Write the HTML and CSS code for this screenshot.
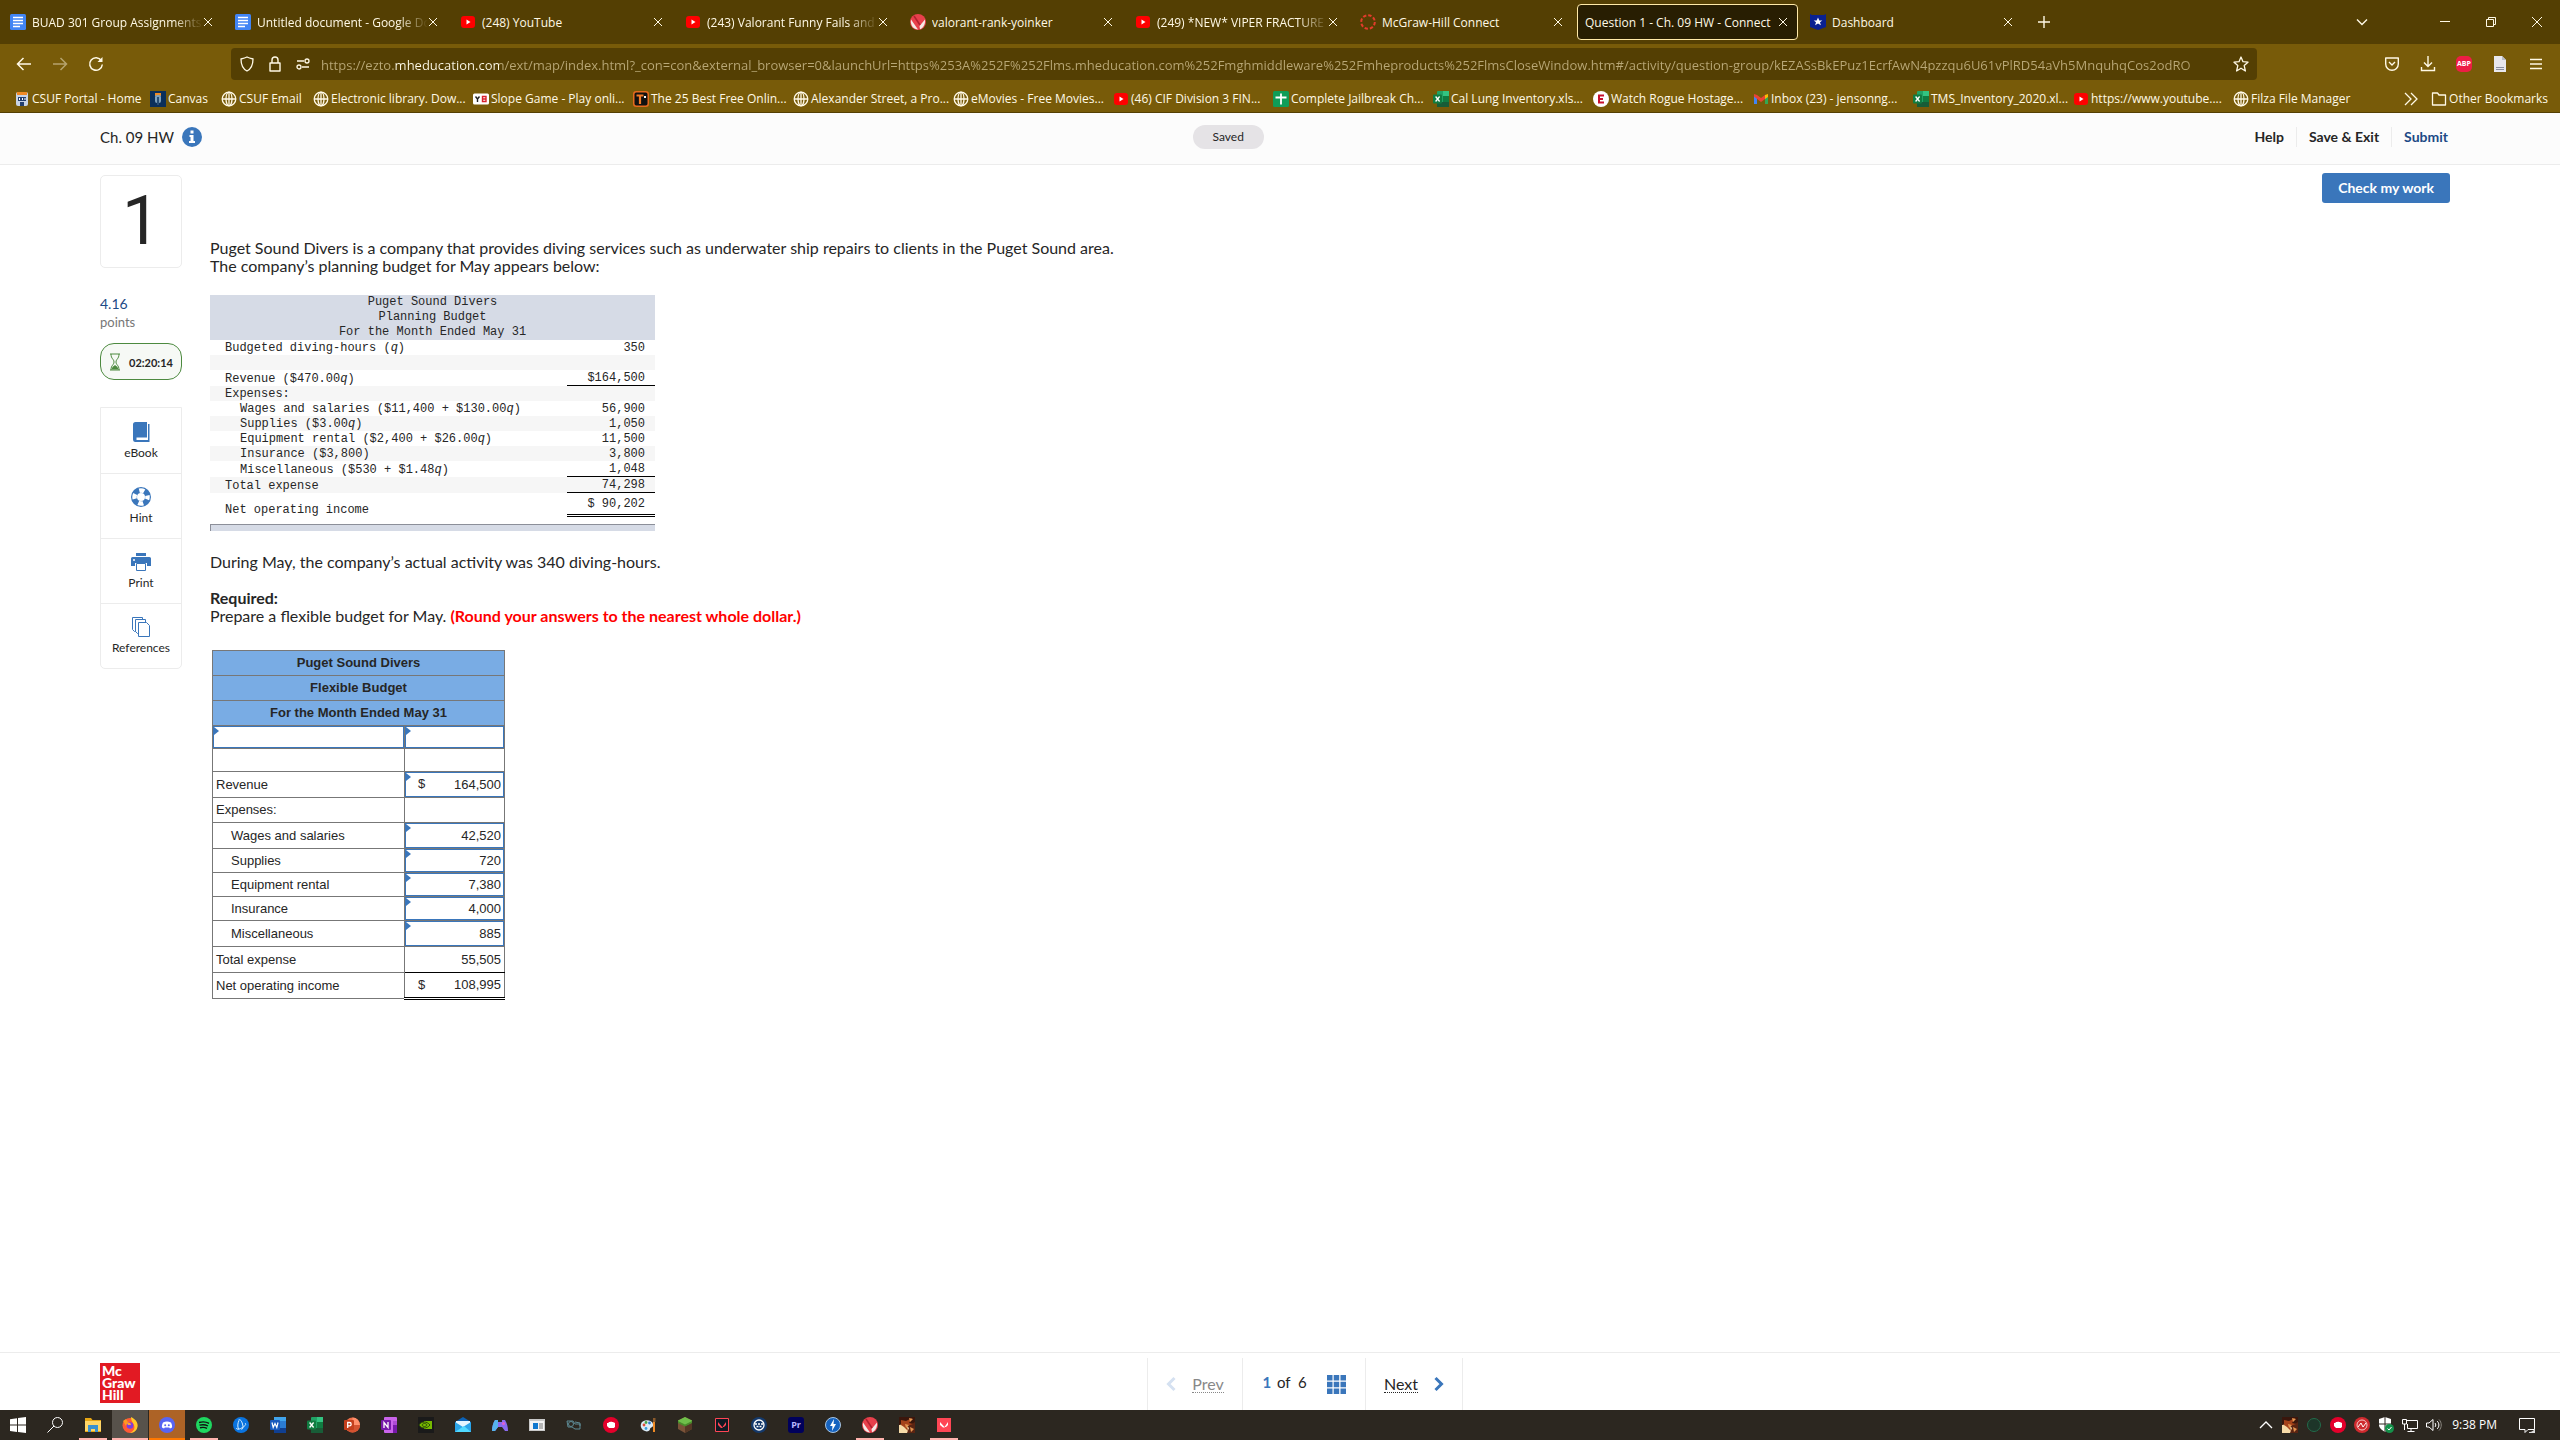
FILE: index.html
```
<!DOCTYPE html>
<html lang="en">
<head>
  <meta charset="UTF-8" />
  <title>Question 1 - Ch. 09 HW - Connect</title>
  <meta name="viewport" content="width=device-width, initial-scale=1" />
  <link rel="stylesheet" href="styles.css">
</head>
<body>

  <!-- shared icons -->
  <svg width="0" height="0" class="sprite" aria-hidden="true">
    <symbol id="i-close" viewBox="0 0 10 10"><path d="M1 1l8 8M9 1l-8 8" stroke="currentColor" fill="none"/></symbol>
    <symbol id="i-doc" viewBox="0 0 16 16"><rect width="16" height="16" rx="1.5" fill="#4285f4"/><path d="M3 3.5h10M3 6.5h10M3 9.5h10M3 12.500h7" stroke="#fff" stroke-width="1.5"/></symbol>
    <symbol id="i-yt" viewBox="0 0 16 16"><rect x="1" y="2" width="14" height="12" rx="3" fill="#f00"/><path d="M6.500 5.500v5l4-2.500z" fill="#fff"/></symbol>
    <symbol id="i-val" viewBox="0 0 16 16"><circle cx="8" cy="8" r="8" fill="#e8404c"/><path d="M1 5.500L8 15.500C4 15.500 0 12 1 5.500z" fill="#f5e9e6"/><path d="M15 5.500L9.500 12l.5 3.300c3-1 5.500-5 5-9.800z" fill="#f5e9e6"/><path d="M4 2l6 9" stroke="#b3202f" stroke-width="1.500"/></symbol>
    <symbol id="i-ring" viewBox="0 0 16 16"><circle cx="8" cy="8" r="6.800" fill="none" stroke="#e23c2c" stroke-width="2" stroke-dasharray="3.400 1.940"/></symbol>
    <symbol id="i-dash" viewBox="0 0 16 16"><path d="M0 0l2 1h12l2-1v13l-8 3-8-3z" fill="#0a2191"/><path d="M8 3.500l1.300 3h3L10 8.300l.9 3L8 9.600l-2.900 1.700.9-3-2.300-1.800h3z" fill="#fff"/></symbol>
    <symbol id="i-globe" viewBox="0 0 16 16"><g fill="none" stroke="currentColor" stroke-width="1.300"><circle cx="8" cy="8" r="6.800"/><ellipse cx="8" cy="8" rx="3" ry="6.800"/><path d="M1.200 8h13.600M8 1v14"/></g></symbol>
    <symbol id="i-csuf" viewBox="0 0 16 16"><rect x="2" y="1" width="12" height="14" rx="2" fill="#c8d3e6"/><path d="M3 1h10v3H3z" fill="#f08a24"/><path d="M4 6h8v4H4zM6 11h4v4H6z" fill="#23406f"/><path d="M5 7h1v2H5zM8 7h1v2H8zM10.500 7h1v2h-1z" fill="#fff"/></symbol>
    <symbol id="i-canvas" viewBox="0 0 16 16"><rect width="16" height="16" fill="#0b2f5b"/><path d="M5 2h6v3H5z" fill="#f08a24"/><rect x="5" y="4" width="6" height="8" rx="2" fill="#7da0bd"/><path d="M7 6h2v8H7z" fill="#274c74"/></symbol>
    <symbol id="i-y8" viewBox="0 0 16 16"><rect y="2.500" width="16" height="11" rx="1.500" fill="#fff"/><path d="M2.500 5.500L4.500 8v3M6.500 5.500L4.500 8" stroke="#222" stroke-width="1.400" fill="none"/><path d="M9.500 5.500h3.500v5H9.500zM9.500 8H13" stroke="#d8202b" stroke-width="1.400" fill="none"/></symbol>
    <symbol id="i-t" viewBox="0 0 16 16"><rect x=".75" y=".75" width="14.500" height="14.500" rx="2.500" fill="#111" stroke="#e56a1e" stroke-width="1.500"/><path d="M3.500 4.500h7M7 4.500V13" stroke="#f47a26" stroke-width="2.200"/><path d="M11 5h2v2h-2z" fill="#fff"/></symbol>
    <symbol id="i-sheet" viewBox="0 0 16 16"><rect width="16" height="16" rx="1.500" fill="#0f9d58"/><path d="M2.500 6.500h11M8 2.500v11" stroke="#fff" stroke-width="1.800"/></symbol>
    <symbol id="i-xl" viewBox="0 0 16 16"><rect x="4" width="12" height="16" rx="1" fill="#21a366"/><path d="M10 0h6v5h-6z" fill="#33c481"/><path d="M4 11h12v5H4z" fill="#185c37"/><path d="M10 5h6v6h-6z" fill="#107c41"/><rect y="3.500" width="9" height="9" rx="1" fill="#107c41"/><path d="M2.600 5.500l4 5M6.600 5.500l-4 5" stroke="#fff" stroke-width="1.300"/></symbol>
    <symbol id="i-e" viewBox="0 0 16 16"><circle cx="8" cy="8" r="8" fill="#fff"/><path d="M11 4.500H6v7h5M6 8h4" stroke="#c8102e" stroke-width="2" fill="none"/></symbol>
    <symbol id="i-gmail" viewBox="0 0 16 16"><path d="M1 4v9h3V7z" fill="#4285f4"/><path d="M12 7v6h3V4z" fill="#34a853"/><path d="M1 3l3 1 4 3 4-3v4L8 11 1 5.500z" fill="#ea4335"/><path d="M12 4l3-1v3l-3 2z" fill="#fbbc04"/></symbol>
    <symbol id="i-fist" viewBox="0 0 16 16"><circle cx="8" cy="8" r="8" fill="#e4002b"/><path d="M4 6h1.600V5h1.700V4.700H9V5h1.600v.7H12V10l-1.200 1H6L4 9z" fill="#fff"/></symbol>
    <symbol id="i-lol" viewBox="0 0 16 16"><rect width="16" height="16" fill="#5a2412"/><path d="M0 8l5-2 5 5-2 5H0z" fill="#f6dba8"/><path d="M0 0h16v5l-5 3-4-2-7 2z" fill="#3a160c"/><path d="M2 3l5 1 6-3-3 5 4 1-6 2 1 5-4-4-3-2z" fill="#a5421a"/><path d="M10 1l4 1-3 3zM6 7l4 1-3 3zM11 10l4 2-3 3z" fill="#e59550"/></symbol>
  </svg>

  <header class="browser">
    <div class="tab-strip">
      <div class="tab"><svg class="ico"><use href="#i-doc"/></svg><a href="#" class="cut">BUAD 301 Group Assignments -</a><button aria-label="Close tab"><svg><use href="#i-close"/></svg></button></div>
      <div class="tab"><svg class="ico"><use href="#i-doc"/></svg><a href="#" class="cut">Untitled document - Google Do</a><button aria-label="Close tab"><svg><use href="#i-close"/></svg></button></div>
      <div class="tab"><svg class="ico"><use href="#i-yt"/></svg><a href="#">(248) YouTube</a><button aria-label="Close tab"><svg><use href="#i-close"/></svg></button></div>
      <div class="tab"><svg class="ico"><use href="#i-yt"/></svg><a href="#" class="cut">(243) Valorant Funny Fails and W</a><button aria-label="Close tab"><svg><use href="#i-close"/></svg></button></div>
      <div class="tab"><svg class="ico"><use href="#i-val"/></svg><a href="#">valorant-rank-yoinker</a><button aria-label="Close tab"><svg><use href="#i-close"/></svg></button></div>
      <div class="tab"><svg class="ico"><use href="#i-yt"/></svg><a href="#" class="cut">(249) *NEW* VIPER FRACTURE M</a><button aria-label="Close tab"><svg><use href="#i-close"/></svg></button></div>
      <div class="tab"><svg class="ico"><use href="#i-ring"/></svg><a href="#">McGraw-Hill Connect</a><button aria-label="Close tab"><svg><use href="#i-close"/></svg></button></div>
      <div class="tab active"><a href="#">Question 1 - Ch. 09 HW - Connect</a><button aria-label="Close tab"><svg><use href="#i-close"/></svg></button></div>
      <div class="tab"><svg class="ico"><use href="#i-dash"/></svg><a href="#">Dashboard</a><button aria-label="Close tab"><svg><use href="#i-close"/></svg></button></div>
      <button class="new-tab" aria-label="New tab"><svg viewBox="0 0 12 12"><path d="M6 0v12M0 6h12" stroke="currentColor" stroke-width="1.400"/></svg></button>
      <div class="window-buttons">
        <button class="list-tabs" aria-label="List all tabs"><svg viewBox="0 0 12 12"><path d="M1 3.500l5 5 5-5" stroke="currentColor" stroke-width="1.400" fill="none"/></svg></button>
        <button aria-label="Minimize"><svg viewBox="0 0 12 12"><path d="M1 5.500h10" stroke="currentColor"/></svg></button>
        <button aria-label="Restore"><svg viewBox="0 0 12 12"><path d="M1.500 3.500h7v7h-7zM3.500 3.500v-2h7v7h-2" stroke="currentColor" fill="none"/></svg></button>
        <button aria-label="Close"><svg viewBox="0 0 12 12"><path d="M1 1l10 10M11 1L1 11" stroke="currentColor"/></svg></button>
      </div>
    </div>

    <div class="nav-bar">
      <div class="nav-buttons">
        <button aria-label="Back"><svg viewBox="0 0 16 16"><path d="M15 8H1.500M7.500 2L1.500 8l6 6" stroke="currentColor" stroke-width="1.500" fill="none"/></svg></button>
        <button aria-label="Forward" disabled><svg viewBox="0 0 16 16"><path d="M1 8h13.500M8.500 2l6 6-6 6" stroke="currentColor" stroke-width="1.500" fill="none"/></svg></button>
        <button aria-label="Reload"><svg viewBox="0 0 16 16"><path d="M13.300 4.500A6.300 6.300 0 1 0 14.300 8.500" stroke="currentColor" stroke-width="1.500" fill="none"/><path d="M14.500 1v5h-5z" fill="currentColor"/></svg></button>
      </div>
      <div class="url-bar">
        <svg viewBox="0 0 16 16"><path d="M8 1c2 1 4 1.500 6 2 0 6-2 10-6 12C4 13 2 9 2 3c2-.5 4-1 6-2z" stroke="currentColor" stroke-width="1.300" fill="none"/></svg>
        <svg viewBox="0 0 16 16"><path d="M3 7h10v8H3zM5 7V4a3 3 0 0 1 6 0v3" stroke="currentColor" stroke-width="1.400" fill="none" stroke-linejoin="round"/></svg>
        <svg viewBox="0 0 16 16"><path d="M2 5h7M7 11h7" stroke="currentColor" stroke-width="1.500"/><circle cx="12" cy="5" r="2" fill="none" stroke="currentColor" stroke-width="1.300"/><circle cx="4" cy="11" r="2" fill="none" stroke="currentColor" stroke-width="1.300"/></svg>
        <input type="text" aria-label="Address" value="https://ezto.mheducation.com/ext/map/index.html?_con=con&amp;external_browser=0&amp;launchUrl=https%253A%252F%252Flms.mheducation.com%252Fmghmiddleware%252Fmheproducts%252FlmsCloseWindow.htm#/activity/question-group/kEZASsBkEPuz1EcrfAwN4pzzqu6U61vPlRD54aVh5MnquhqCos2odRO">
        <button aria-label="Bookmark this page"><svg viewBox="0 0 16 16"><path d="M8 1l2 4.700 5 .5-3.800 3.400L12.400 15 8 12.200 3.600 15l1.200-5.400L1 6.200l5-.5z" stroke="currentColor" stroke-width="1.300" fill="none" stroke-linejoin="round"/></svg></button>
      </div>
      <div class="nav-buttons tools">
        <button aria-label="Pocket"><svg viewBox="0 0 16 16"><path d="M1.700 2h12.600v6a6.300 6.300 0 0 1-12.600 0zM5 6l3 3 3-3" stroke="currentColor" stroke-width="1.400" fill="none" stroke-linejoin="round"/></svg></button>
        <button aria-label="Downloads"><svg viewBox="0 0 16 16"><path d="M8 0v10M4 6.500L8 10.500l4-4M1.500 11v3.500h13V11" stroke="currentColor" stroke-width="1.400" fill="none"/></svg></button>
        <button aria-label="Adblock Plus" class="abp"><span>ABP</span></button>
        <button aria-label="Reader"><svg viewBox="0 0 16 16"><path d="M2 0h8l4 4v12H2z" fill="#e8e8ee"/><path d="M10 0v4h4z" fill="#b9bcc6"/><path d="M4 11.500h8M4 13.500h8" stroke="#8a8fa0"/></svg></button>
        <button aria-label="Menu"><svg viewBox="0 0 16 16"><path d="M2 3.500h12M2 8h12M2 12.500h12" stroke="currentColor" stroke-width="1.300"/></svg></button>
      </div>
    </div>

    <nav class="bookmarks">
      <a href="#" class="w-portal"><svg><use href="#i-csuf"/></svg>CSUF Portal - Home</a>
      <a href="#" class="w-canvas"><svg><use href="#i-canvas"/></svg>Canvas</a>
      <a href="#" class="w-email"><svg><use href="#i-globe"/></svg>CSUF Email</a>
      <a href="#"><svg><use href="#i-globe"/></svg>Electronic library. Dow...</a>
      <a href="#"><svg><use href="#i-y8"/></svg>Slope Game - Play onli...</a>
      <a href="#"><svg><use href="#i-t"/></svg>The 25 Best Free Onlin...</a>
      <a href="#"><svg><use href="#i-globe"/></svg>Alexander Street, a Pro...</a>
      <a href="#"><svg><use href="#i-globe"/></svg>eMovies - Free Movies...</a>
      <a href="#"><svg><use href="#i-yt"/></svg>(46) CIF Division 3 FIN...</a>
      <a href="#"><svg><use href="#i-sheet"/></svg>Complete Jailbreak Ch...</a>
      <a href="#"><svg><use href="#i-xl"/></svg>Cal Lung Inventory.xls...</a>
      <a href="#"><svg><use href="#i-e"/></svg>Watch Rogue Hostage...</a>
      <a href="#"><svg><use href="#i-gmail"/></svg>Inbox (23) - jensonng...</a>
      <a href="#"><svg><use href="#i-xl"/></svg>TMS_Inventory_2020.xl...</a>
      <a href="#"><svg><use href="#i-yt"/></svg>https://www.youtube....</a>
      <a href="#"><svg><use href="#i-globe"/></svg>Filza File Manager</a>
      <button class="more" aria-label="More bookmarks"><svg viewBox="0 0 16 16"><path d="M2 2l6 6-6 6M8 2l6 6-6 6" stroke="currentColor" stroke-width="1.300" fill="none"/></svg></button>
      <a href="#" class="other"><svg viewBox="0 0 16 16"><path d="M1.500 2h5l1.500 2h6.500v10h-13z" stroke="currentColor" stroke-width="1.300" fill="none" stroke-linejoin="round"/></svg>Other Bookmarks</a>
    </nav>
  </header>

  <header class="page-header">
    <div class="assignment">
      <span>Ch. 09 HW</span>
      <button aria-label="Assignment info"><svg viewBox="0 0 20 20"><circle cx="10" cy="10" r="10" fill="#3a76bb"/><path d="M8.500 3.500h3v3h-3zM7.500 8h4v6H13v2H7v-2h1.500v-4h-1z" fill="#fff"/></svg></button>
    </div>
    <span class="saved">Saved</span>
    <nav class="actions">
      <a href="#">Help</a>
      <a href="#">Save &amp; Exit</a>
      <a href="#" class="submit">Submit</a>
    </nav>
  </header>

  <main>
    <aside>
      <div class="number">1</div>
      <div class="points"><b>4.16</b>points</div>
      <div class="timer">
        <svg viewBox="0 0 12 18"><path d="M1 1h10M1 17h10M2 1c0 5 3 5 3 8s-3 3-3 8M10 1c0 5-3 5-3 8s3 3 3 8" stroke="#4c8a3f" fill="none"/><path d="M2.500 16.500C3 13.500 5 13 6 12c1 1 3 1.500 3.500 4.500z" fill="#4c8a3f"/></svg>
        <span>02:20:14</span>
      </div>
      <div class="tools-list">
        <button><svg viewBox="0 0 20 20"><path d="M4.500 0H16v15.500H5.500v2.500H17V2h1.500v18H4a2.500 2.500 0 0 1-2-2.500V2.500A2.500 2.500 0 0 1 4.500 0z" fill="#3a76bb"/></svg>eBook</button>
        <button><svg viewBox="0 0 20 20"><circle cx="10" cy="10" r="7" fill="none" stroke="#3a76bb" stroke-width="6"/><circle cx="10" cy="10" r="6.500" fill="none" stroke="#fff" stroke-width="4.500" stroke-dasharray="5.100 5.110" stroke-dashoffset="2.550"/></svg>Hint</button>
        <button><svg viewBox="0 0 20 20"><path d="M5 1h10v3H5zM1.500 5h17A1.500 1.500 0 0 1 20 6.500V14h-4v-3H4v3H0V6.500A1.500 1.500 0 0 1 1.500 5z" fill="#3a76bb"/><path d="M5.500 11.500h9v7h-9z" fill="#fff" stroke="#3a76bb"/><circle cx="3" cy="8" r="1" fill="#fff"/></svg>Print</button>
        <button><svg viewBox="0 0 20 20"><g fill="#fff" stroke="#3a76bb"><path d="M1.500.5h10v14h-8l-2-2z"/><path d="M4.500 2.500h10v14h-8l-2-2z"/><path d="M7.500 5.500h8l3 3v11h-11z"/></g></svg>References</button>
      </div>
    </aside>

    <section class="question">
      <p>Puget Sound Divers is a company that provides diving services such as underwater ship repairs to clients in the Puget Sound area.<br>The company’s planning budget for May appears below:</p>

      <table class="planning">
        <thead>
          <tr><th colspan="2">Puget Sound Divers<br>Planning Budget<br>For the Month Ended May 31</th></tr>
        </thead>
        <tbody>
          <tr><td>Budgeted diving-hours (<i>q</i>)</td><td>350</td></tr>
          <tr><td>&nbsp;</td><td></td></tr>
          <tr><td>Revenue ($470.00<i>q</i>)</td><td class="line">$164,500</td></tr>
          <tr><td>Expenses:</td><td></td></tr>
          <tr><td class="sub">Wages and salaries ($11,400 + $130.00<i>q</i>)</td><td>56,900</td></tr>
          <tr><td class="sub">Supplies ($3.00<i>q</i>)</td><td>1,050</td></tr>
          <tr><td class="sub">Equipment rental ($2,400 + $26.00<i>q</i>)</td><td>11,500</td></tr>
          <tr><td class="sub">Insurance ($3,800)</td><td>3,800</td></tr>
          <tr><td class="sub">Miscellaneous ($530 + $1.48<i>q</i>)</td><td class="line">1,048</td></tr>
          <tr><td>Total expense</td><td class="line">74,298</td></tr>
          <tr><td>Net operating income</td><td class="double">$ 90,202</td></tr>
        </tbody>
      </table>
      <div class="table-end"></div>

      <p>During May, the company’s actual activity was 340 diving-hours.</p>
      <p><b>Required:</b><br>Prepare a flexible budget for May. <b class="red">(Round your answers to the nearest whole dollar.)</b></p>

      <table class="flexible">
        <thead>
          <tr><th colspan="2">Puget Sound Divers</th></tr>
          <tr><th colspan="2">Flexible Budget</th></tr>
          <tr><th colspan="2">For the Month Ended May 31</th></tr>
        </thead>
        <tbody>
          <tr class="short"><td class="entry"><input type="text" aria-label="Activity label"></td><td class="entry"><input type="text" aria-label="Activity amount"></td></tr>
          <tr class="short"><td></td><td></td></tr>
          <tr class="tall"><td><label for="revenue">Revenue</label></td><td class="entry"><span class="cur">$</span><input type="text" id="revenue" value="164,500"></td></tr>
          <tr><td>Expenses:</td><td></td></tr>
          <tr class="tall"><td class="sub"><label for="wages">Wages and salaries</label></td><td class="entry"><input type="text" id="wages" value="42,520"></td></tr>
          <tr class="mid"><td class="sub"><label for="supplies">Supplies</label></td><td class="entry"><input type="text" id="supplies" value="720"></td></tr>
          <tr class="mid"><td class="sub"><label for="rental">Equipment rental</label></td><td class="entry"><input type="text" id="rental" value="7,380"></td></tr>
          <tr class="mid"><td class="sub"><label for="insurance">Insurance</label></td><td class="entry"><input type="text" id="insurance" value="4,000"></td></tr>
          <tr class="tall"><td class="sub"><label for="misc">Miscellaneous</label></td><td class="entry"><input type="text" id="misc" value="885"></td></tr>
          <tr class="tall"><td>Total expense</td><td class="total">55,505</td></tr>
          <tr class="tall"><td>Net operating income</td><td class="total grand"><span class="cur">$</span>108,995</td></tr>
        </tbody>
      </table>
    </section>

    <button class="check">Check my work</button>
  </main>

  <footer class="page-footer">
    <div class="logo">Mc<br>Graw<br>Hill</div>
    <nav class="pager">
      <div class="prev"><svg viewBox="0 0 10 16"><path d="M8.500 2l-6 6 6 6" stroke="#d5e1f1" stroke-width="3" fill="none"/></svg><a href="#">Prev</a></div>
      <div class="count"><span><b>1</b> of &nbsp;6</span>
        <button aria-label="All questions"><svg viewBox="0 0 19 19"><path d="M0 0h5.500v5.500H0zM6.700 0h5.500v5.500H6.700zM13.500 0H19v5.500h-5.500zM0 6.700h5.500v5.500H0zM6.700 6.700h5.500v5.500H6.700zM13.500 6.700H19v5.500h-5.500zM0 13.500h5.500V19H0zM6.700 13.500h5.500V19H6.700zM13.500 13.500H19V19h-5.500z" fill="#3a76bb"/></svg></button>
      </div>
      <div class="next"><a href="#">Next</a><svg viewBox="0 0 10 16"><path d="M1.500 2l6 6-6 6" stroke="#3a76bb" stroke-width="3" fill="none"/></svg></div>
    </nav>
  </footer>

  <div class="taskbar">
    <button aria-label="Start"><svg viewBox="0 0 16 16"><path d="M0 2.200L7 1.200V7.600H0zM8 1l8-1v7.600H8zM0 8.500h7v6.400L0 13.900zM8 8.500h8V16l-8-1z" fill="#fff"/></svg></button>
    <button aria-label="Search" class="search"><svg viewBox="0 0 16 16"><circle cx="10.500" cy="5.500" r="5" stroke="#fff" fill="none"/><path d="M7 9l-6.500 6.500" stroke="#fff"/></svg></button>
    <button aria-label="File Explorer" class="open"><svg viewBox="0 0 16 16"><path d="M0 1h6l1.500 2H16v12H0z" fill="#e7a614"/><path d="M0 4h16v10H0z" fill="#ffd667"/><path d="M3 8h10v7h-3v-3H6v3H3z" fill="#3a91d0"/></svg></button>
    <button aria-label="Firefox" class="open current"><svg viewBox="0 0 16 16"><circle cx="8" cy="8.500" r="7.500" fill="#ff5a36"/><path d="M9 0c4 2 7 5 6.500 9.500S11 16 8 16c4-2 6-5 3-10-1-2-2-3-2-6z" fill="#ffca28"/><path d="M1 4l3-2 2 3-2 4z" fill="#ff9a1f"/><circle cx="8" cy="8.500" r="3.300" fill="#7a3fe0"/><path d="M5 6c2-1 4 0 4 2H6z" fill="#ffa436"/></svg></button>
    <button aria-label="Discord" class="alert"><svg viewBox="0 0 16 16"><circle cx="8" cy="8" r="8" fill="#5865f2"/><path d="M4 5.500c3-1.500 5-1.500 8 0 1 2 1.300 3.500 1 5l-2 1-.8-1H5.800l-.8 1-2-1c-.3-1.500 0-3 1-5z" fill="#fff"/><circle cx="6.200" cy="8.300" r="1" fill="#5865f2"/><circle cx="9.800" cy="8.300" r="1" fill="#5865f2"/></svg></button>
    <button aria-label="Spotify" class="open"><svg viewBox="0 0 16 16"><circle cx="8" cy="8" r="8" fill="#1ed760"/><path d="M3 5.500c4-1.200 7-.8 10 .8M3.500 8.200c3.500-1 6-.6 8.500.8M4 10.800c3-.8 5-.5 7 .6" stroke="#111" stroke-width="1.400" fill="none"/></svg></button>
    <button aria-label="Battle.net"><svg viewBox="0 0 16 16"><circle cx="8" cy="8" r="8" fill="#0a74e0"/><path d="M5.500 3c2-1 3 1 4 4s.5 5-1 5.500M3.500 11c0 2 3 1.500 6-.5s4-3 2.500-4.500M6 3.500c-1.500 3-1.500 6-.5 8.500" stroke="#d9efff" fill="none"/></svg></button>
    <button aria-label="Word"><svg viewBox="0 0 16 16"><rect x="4" width="12" height="16" rx="1" fill="#2b7cd3"/><path d="M4 0h12v4H4z" fill="#41a5ee"/><path d="M4 11h12v5H4z" fill="#103f91"/><rect y="3" width="10" height="10" rx="1" fill="#185abd"/><path d="M2 5.500l1.200 5L5 6.500l1.800 4 1.200-5" stroke="#fff" stroke-width="1.200" fill="none"/></svg></button>
    <button aria-label="Excel"><svg><use href="#i-xl"/></svg></button>
    <button aria-label="PowerPoint"><svg viewBox="0 0 16 16"><circle cx="8.500" cy="8" r="7.500" fill="#ed6c47"/><path d="M8.500.5A7.500 7.500 0 0 1 16 8H8.500z" fill="#ff8f6b"/><path d="M1 8h15a7.500 7.500 0 0 1-15 0z" fill="#d35230"/><rect y="3" width="10" height="10" rx="1" fill="#c43e1c"/><path d="M3.700 11V5.500H5.500a1.500 1.500 0 0 1 0 3.300H4" stroke="#fff" stroke-width="1.300" fill="none"/></svg></button>
    <button aria-label="OneNote"><svg viewBox="0 0 16 16"><rect x="3" width="13" height="16" rx="1" fill="#ca64ea"/><path d="M12 4h4v4h-4z" fill="#ae4bd5"/><path d="M12 8h4v8h-4z" fill="#7719aa"/><rect y="3" width="10" height="10" rx="1" fill="#7719aa"/><path d="M3 11V5.500L7 10.500V5" stroke="#fff" stroke-width="1.300" fill="none"/></svg></button>
    <button aria-label="NVIDIA"><svg viewBox="0 0 16 16"><rect width="16" height="16" fill="#1a1a1a"/><path d="M6 4h8v8H6z" fill="#76b900"/><path d="M1 8c2-4 8-4 11 0-3 4-9 4-11 0zM4 8c1-2 4-2 5 0-1 2-4 2-5 0z" stroke="#2f4a08" fill="#76b900"/></svg></button>
    <button aria-label="Mail"><svg viewBox="0 0 16 16"><path d="M0 5l8-5 8 5v2H0z" fill="#0d62b5"/><path d="M1 4h14v6H1z" fill="#e4f4ff"/><path d="M0 5l8 5 8-5v10H0z" fill="#2ba5ea"/><path d="M0 15l9-6 7 6z" fill="#50d9ff"/></svg></button>
    <button aria-label="Controller"><svg viewBox="0 0 16 16"><path d="M3 3h3v2h4V3h3c2 3 3 7 3 11h-3l-3-4H6l-3 4H0C0 10 1 6 3 3z" fill="#8a6bf0"/><path d="M3 3h3v7l-3 4H0C0 10 1 6 3 3z" fill="#55b4ee"/><circle cx="11.500" cy="6.500" r="1.500" fill="#e45fd0"/></svg></button>
    <button aria-label="Setup"><svg viewBox="0 0 16 16"><path d="M0 2h16v12H0z" fill="#c9c9c9"/><path d="M1 4h14v9H1z" fill="#f4f4f4"/><path d="M4 6h5v6H4z" fill="#1178cf"/><path d="M10 7h4M10 9h4M10 11h4" stroke="#777"/></svg></button>
    <button aria-label="Capture"><svg viewBox="0 0 16 16"><g fill="none" stroke="#5d8a94"><path d="M1 4h6l2 3h5v5H9L6 10H2z"/><circle cx="5" cy="7" r="2.500"/><path d="M9 5l5 1v3"/></g></svg></button>
    <button aria-label="Riot"><svg><use href="#i-fist"/></svg></button>
    <button aria-label="Paint"><svg viewBox="0 0 16 16"><path d="M1 7c1-5 11-5 12 0 1 4-3 3-3 5s-3 3-5 2c-3-1-5-4-4-7z" fill="#dcebf6"/><circle cx="4" cy="8" r="1.400" fill="#e24a35"/><circle cx="6" cy="5.500" r="1.400" fill="#47a648"/><circle cx="9.500" cy="6" r="1.400" fill="#2e7ad1"/><circle cx="6" cy="11.500" r="1.400" fill="#3aa0e0"/><path d="M13 5h2v10h-2z" fill="#f08a24"/><path d="M13 1h2.500v4H13z" fill="#8b5a2b"/></svg></button>
    <button aria-label="Minecraft"><svg viewBox="0 0 16 16"><path d="M8 0l7 3.500V12l-7 4-7-4V3.500z" fill="#7a5338"/><path d="M8 8l7-4v8l-7 4z" fill="#553825"/><path d="M8 0l7 3.500v2L8 9 1 5.500v-2z" fill="#6fc04a"/><path d="M1 4l7 3.500L15 4v2L8 9.500 1 6z" fill="#4a8c2c"/></svg></button>
    <button aria-label="Valorant"><svg viewBox="0 0 16 16"><path d="M1.500 1.500h13v13h-13z" fill="#0f1923" stroke="#ff4655"/><path d="M4 5l5 6H7L4 8zM12 5v3l-2 2H8.500z" fill="#ff4655"/></svg></button>
    <button aria-label="Face"><svg viewBox="0 0 16 16"><circle cx="8" cy="8" r="8" fill="#14396b"/><circle cx="8" cy="8" r="5" fill="none" stroke="#fff" stroke-width="1.300"/><path d="M4 7h8M5.500 9.500h5" stroke="#fff" stroke-width="1.300" stroke-dasharray="2 1"/></svg></button>
    <button aria-label="Premiere" class="premiere"><span>Pr</span></button>
    <button aria-label="Boost"><svg viewBox="0 0 16 16"><circle cx="8" cy="8" r="7.500" fill="#1563c0" stroke="#a8c4e0"/><path d="M9 2L5 9h2.500L7 14l4-7H8.500z" fill="#fff"/></svg></button>
    <button aria-label="Yoinker" class="open"><svg><use href="#i-val"/></svg></button>
    <button aria-label="League"><svg><use href="#i-lol"/></svg></button>
    <button aria-label="Valorant tracker" class="open"><svg viewBox="0 0 16 16"><path d="M1 1h14v14H1z" fill="#ff4655"/><path d="M4 5l5 5.500H7L4 8zM12 5v3l-2 2H8.500z" fill="#fff"/></svg></button>

    <div class="tray">
      <svg viewBox="0 0 16 16"><path d="M2 11l6-6 6 6" stroke="#fff" stroke-width="1.300" fill="none"/></svg>
      <svg><use href="#i-lol"/></svg>
      <svg viewBox="0 0 16 16"><circle cx="8" cy="8" r="6.500" fill="#1d3529" stroke="#226b4a"/></svg>
      <svg><use href="#i-fist"/></svg>
      <svg viewBox="0 0 16 16"><circle cx="8" cy="8" r="8" fill="#cf2a2e"/><circle cx="8" cy="8" r="5" fill="none" stroke="#f3c7c7"/><path d="M4 10l3-4 2 4 3-4" stroke="#fff" fill="none"/></svg>
      <svg viewBox="0 0 16 16"><path d="M7 0l6 2v6c0 3-3 5-6 7-3-2-6-4-6-7V2z" fill="#fff"/><path d="M7 0v15M1 7h12" stroke="#2c2720"/><circle cx="11.500" cy="11.500" r="4.500" fill="#14914a"/><path d="M9.500 11.500l1.500 1.500 2.500-3" stroke="#fff" fill="none"/></svg>
      <svg viewBox="0 0 16 16"><path d="M4 3.500h11.500v8H5.500V7M9 11.500V14M5.500 14.500h7M.5 2.500h4V7h-4zM2.500 7v6" stroke="#fff" fill="none"/></svg>
      <svg viewBox="0 0 16 16"><path d="M.5 6h2.500l4-3.500v11L3 10H.5zM9 6c1 1 1 3 0 4M11 4c2.500 2 2.500 6 0 8" stroke="#fff" fill="none"/><path d="M13 2.500c3 3 3 8 0 11" stroke="#8b8780" fill="none"/></svg>
      <time>9:38 PM</time>
      <svg class="notes" viewBox="0 0 16 16"><path d="M.5 1.500h15v11H9l-3 3v-3H.5z" stroke="#fff" fill="none"/><path d="M16 10a5 5 0 1 1-6 5c3 0 6-2 6-5z" fill="#ddd"/></svg>
    </div>
  </div>

</body>
</html>
```
FILE: styles.css
```
:root {
  --chrome-dark: #543f03;
  --chrome: #785b09;
  --chrome-text: #fff9e6;
  --blue: #3a76bb;
  --line: #ececec;
  --text: #262626;
}
* {
  margin: 0;
  padding: 0;
  box-sizing: border-box;
}
body {
  font-family: Lato, sans-serif;
  font-size: 16px;
  line-height: 18px;
  color: var(--text);
  background: #fff;
  min-height: 100vh;
  display: flex;
  flex-direction: column;
}
a {
  color: inherit;
  text-decoration: none;
}
button {
  background: none;
  border: none;
  color: inherit;
  font: inherit;
  cursor: pointer;
}
svg {
  display: block;
  flex: none;
  width: 16px;
  height: 16px;
}
.sprite {
  position: absolute;
  width: 0;
  height: 0;
}

/* browser window */
.browser {
  font-family: "Open Sans", sans-serif;
  font-size: 12px;
  color: var(--chrome-text);
  background: var(--chrome);
  border-bottom: 1px solid var(--chrome-dark);
}
.tab-strip {
  display: flex;
  align-items: center;
  height: 44px;
  background: var(--chrome-dark);
}
.tab {
  flex: 0 1 221px;
  min-width: 0;
  height: 36px;
  margin: 0 2px;
  padding: 0 10px 0 8px;
  display: flex;
  align-items: center;
  border-radius: 4px;
}
.tab.active {
  background: #281e02;
  border: 1px solid #ffe9a8;
  padding: 0 9px 0 7px;
}
.tab .ico {
  margin-right: 6px;
}
.tab a {
  flex: 1;
  min-width: 0;
  padding-top: 2px;
  overflow: hidden;
  white-space: nowrap;
}
.tab .cut {
  -webkit-mask-image: linear-gradient(to left, transparent, #000 30px);
  mask-image: linear-gradient(to left, transparent, #000 30px);
}
.tab button svg {
  width: 10px;
  height: 10px;
}
.new-tab {
  width: 38px;
  display: flex;
  justify-content: center;
}
.new-tab svg,
.window-buttons svg {
  width: 12px;
  height: 12px;
}
.window-buttons {
  margin-left: auto;
  display: flex;
}
.window-buttons button {
  width: 46px;
  display: flex;
  justify-content: center;
}
.window-buttons .list-tabs {
  margin-right: 37px;
}
.nav-bar {
  display: flex;
  align-items: center;
  height: 40px;
  padding: 0 6px;
}
.nav-buttons {
  display: flex;
  width: 225px;
}
.nav-buttons button {
  width: 36px;
  display: flex;
  justify-content: center;
}
.nav-buttons button:disabled {
  opacity: 0.45;
}
.nav-buttons.tools {
  width: 297px;
  justify-content: flex-end;
}
.abp span {
  width: 16px;
  height: 16px;
  border-radius: 5px;
  background: #ed1e45;
  color: #fff;
  font-size: 7px;
  font-weight: 700;
  line-height: 16px;
  text-align: center;
}
.url-bar {
  flex: 1;
  height: 32px;
  display: flex;
  align-items: center;
  gap: 12px;
  padding: 0 8px;
  background: var(--chrome-dark);
  border-radius: 4px;
}
.url-bar input {
  flex: 1;
  min-width: 0;
  height: 32px;
  margin: 0 -2px;
  padding-top: 1px;
  border: none;
  outline: none;
  font-family: "Open Sans", sans-serif;
  font-size: 13px;
  color: transparent;
  background: linear-gradient(to right, #b9a877 73px, #fffbea 73px, #fffbea 178px, #b9a877 178px, #b9a877 calc(100% - 40px), transparent);
  -webkit-background-clip: text;
  background-clip: text;
}
.bookmarks {
  display: flex;
  align-items: center;
  height: 28px;
  padding: 1px 12px 0 14px;
}
.bookmarks a {
  flex: 0 1 160px;
  min-width: 0;
  display: flex;
  align-items: center;
  gap: 2px;
  white-space: nowrap;
}
.bookmarks .w-portal {
  flex-basis: 136px;
}
.bookmarks .w-canvas {
  flex-basis: 71px;
}
.bookmarks .w-email {
  flex-basis: 92px;
}
.bookmarks .more {
  margin-left: auto;
  margin-right: 12px;
}
.bookmarks .other {
  flex: none;
}

/* assignment header */
.page-header {
  height: 52px;
  display: flex;
  justify-content: space-between;
  align-items: center;
  padding: 0 112px 3px 100px;
  background: #fcfcfc;
  border-bottom: 1px solid var(--line);
}
.assignment {
  display: flex;
  align-items: center;
  gap: 8px;
  font-size: 15px;
}
.assignment svg {
  width: 20px;
  height: 20px;
}
.saved {
  padding: 0 20px;
  border-radius: 12px;
  background: #e5e3e6;
  font-size: 12px;
  line-height: 24px;
}
.actions {
  display: flex;
  font-size: 14px;
  font-weight: 700;
  line-height: 20px;
}
.actions a + a {
  margin-left: 12px;
  padding-left: 12px;
  border-left: 1px solid var(--line);
}
.actions .submit {
  color: #1d4a86;
}

/* question */
main {
  flex: 1;
  display: flex;
  align-items: flex-start;
  padding: 8px 110px 20px 100px;
}
aside {
  width: 82px;
  margin-right: 28px;
  padding-top: 2px;
}
.number {
  height: 93px;
  border: 1px solid var(--line);
  border-radius: 5px;
  font-family: Roboto, sans-serif;
  font-size: 68px;
  line-height: 91px;
  text-align: center;
}
.points {
  margin-top: 27px;
  font-size: 13px;
  color: #777;
}
.points b {
  display: block;
  font-weight: 400;
  font-size: 14px;
  color: #1d4a86;
}
.timer {
  height: 37px;
  margin-top: 12px;
  display: flex;
  align-items: center;
  justify-content: center;
  gap: 8px;
  border: 1px solid #4c8a3f;
  border-radius: 14px;
  background: #f6f9f5;
  font-size: 11px;
  font-weight: 700;
}
.timer svg {
  width: 12px;
  height: 18px;
}
.timer span {
  padding-top: 3px;
}
.tools-list {
  margin-top: 27px;
  border: 1px solid var(--line);
  border-radius: 0 0 5px 5px;
}
.tools-list button {
  width: 100%;
  height: 65px;
  padding-top: 2px;
  display: flex;
  flex-direction: column;
  align-items: center;
  justify-content: center;
  gap: 2px;
  font-size: 12px;
}
.tools-list button + button {
  border-top: 1px solid var(--line);
}
.tools-list svg {
  width: 20px;
  height: 20px;
}
.question {
  flex: 1;
  padding-top: 66px;
}
.question p {
  margin-bottom: 18px;
}
.red {
  color: #f00;
}
.planning {
  width: 445px;
  margin-top: 20px;
  border-spacing: 0;
  font-family: "Liberation Mono", monospace;
  font-size: 12px;
  line-height: 15px;
}
.planning th {
  background: #d6dbe6;
  font-weight: 400;
}
.planning tr:nth-child(even) {
  background: #f6f6f6;
}
.planning td {
  padding: 2px 0 0 15px;
  line-height: 13px;
  vertical-align: bottom;
}
.planning td.sub {
  padding-left: 30px;
}
.planning td:last-child {
  width: 88px;
  padding: 2px 10px 0 0;
  text-align: right;
}
.planning td.line {
  border-bottom: 1px solid #000;
}
.planning td.double {
  padding: 5px 10px 3px 0;
  border-bottom: 3px double #000;
}
.table-end {
  width: 445px;
  height: 7px;
  margin: 7px 0 22px;
  background: #d6dbe6;
  border-top: 1px solid #8c8f99;
  border-left: 1px solid #8c8f99;
}
.flexible {
  width: 293px;
  margin: 25px 0 0 2px;
  border-collapse: collapse;
  font-family: "Liberation Sans", Arial, sans-serif;
  font-size: 13px;
  line-height: 16px;
}
.flexible tr {
  height: 25px;
}
.flexible .short {
  height: 23px;
}
.flexible .mid {
  height: 24px;
}
.flexible .tall {
  height: 26px;
}
.flexible th,
.flexible td {
  border: 1px solid #777;
}
.flexible th {
  background: #79ace4;
}
.flexible td {
  padding-left: 3px;
}
.flexible td.sub {
  padding-left: 18px;
}
.flexible td:last-child {
  width: 100px;
  padding-right: 3px;
  text-align: right;
}
.flexible td.entry,
.flexible td.entry:last-child {
  position: relative;
  height: inherit;
  padding: 0;
}
/* blue corner marker on answer cells */
.entry::before {
  content: "";
  position: absolute;
  top: 1px;
  left: 1px;
  border-left: 5px solid var(--blue);
  border-top: 4px solid transparent;
  border-bottom: 4px solid transparent;
}
.entry input {
  display: block;
  width: 100%;
  height: 100%;
  border: 1px solid var(--blue);
  padding-right: 2px;
  background: none;
  color: inherit;
  font: inherit;
  text-align: right;
}
.cur {
  position: absolute;
  left: 13px;
}
.entry .cur {
  top: 4px;
}
.flexible td.total {
  position: relative;
  border-top-color: #000;
  border-bottom-color: #000;
}
.flexible td.grand {
  border-bottom: 3px double #000;
}
.check {
  height: 30px;
  padding: 0 16px;
  border-radius: 3px;
  background: var(--blue);
  color: #fff;
  font-size: 14px;
  font-weight: 700;
}

/* footer */
.page-footer {
  height: 58px;
  display: flex;
  padding: 0 90px 0 100px;
  border-top: 1px solid var(--line);
}
.logo {
  width: 40px;
  height: 40px;
  margin-top: 10px;
  padding: 2px;
  background: #e21a23;
  color: #fff;
  font-size: 14px;
  font-weight: 900;
  line-height: 12px;
}
.pager {
  display: flex;
  margin: 5px auto 0;
  font-size: 16px;
}
.pager div {
  display: flex;
  align-items: center;
  justify-content: center;
  border-left: 1px solid var(--line);
}
.pager svg {
  width: 10px;
}
.pager a {
  border-bottom: 1px dotted currentColor;
  line-height: 16px;
}
.pager .prev {
  width: 95px;
  gap: 16px;
  color: #888;
}
.pager .count {
  width: 123px;
  gap: 20px;
}
.pager .count span {
  font-size: 15px;
  padding-bottom: 4px;
}
.pager .count b {
  color: var(--blue);
  margin-right: 2px;
}
.pager .count svg {
  width: 19px;
  height: 19px;
}
.pager .next {
  width: 98px;
  gap: 16px;
  border-right: 1px solid var(--line);
}

/* taskbar */
.taskbar {
  height: 30px;
  display: flex;
  background: #2c2720;
  color: #fff;
}
.taskbar button {
  width: 36px;
  margin-right: 1px;
  display: flex;
  align-items: center;
  justify-content: center;
}
.taskbar .search {
  margin-right: 2px;
}
.taskbar .open {
  background: linear-gradient(#ffb3ae, #ffb3ae) center bottom / 28px 2px no-repeat;
}
.taskbar .current {
  background: linear-gradient(#ffb3ae, #ffb3ae) center bottom / 36px 2px no-repeat #57524b;
}
.taskbar .alert {
  background: linear-gradient(#ff7800, #ff7800) center bottom / 36px 2px no-repeat #ad6326;
}
.premiere span {
  width: 16px;
  height: 16px;
  border-radius: 3px;
  background: #00005b;
  color: #b9b9ff;
  font-family: "Open Sans", sans-serif;
  font-size: 9px;
  font-weight: 700;
  line-height: 16px;
}
.tray {
  margin-left: auto;
  padding-right: 5px;
  display: flex;
  align-items: center;
  gap: 8px;
}
.tray time {
  margin-left: 2px;
  font-family: "Open Sans", sans-serif;
  font-size: 12px;
}
.tray .notes {
  margin: 0 20px 0 14px;
}
```
